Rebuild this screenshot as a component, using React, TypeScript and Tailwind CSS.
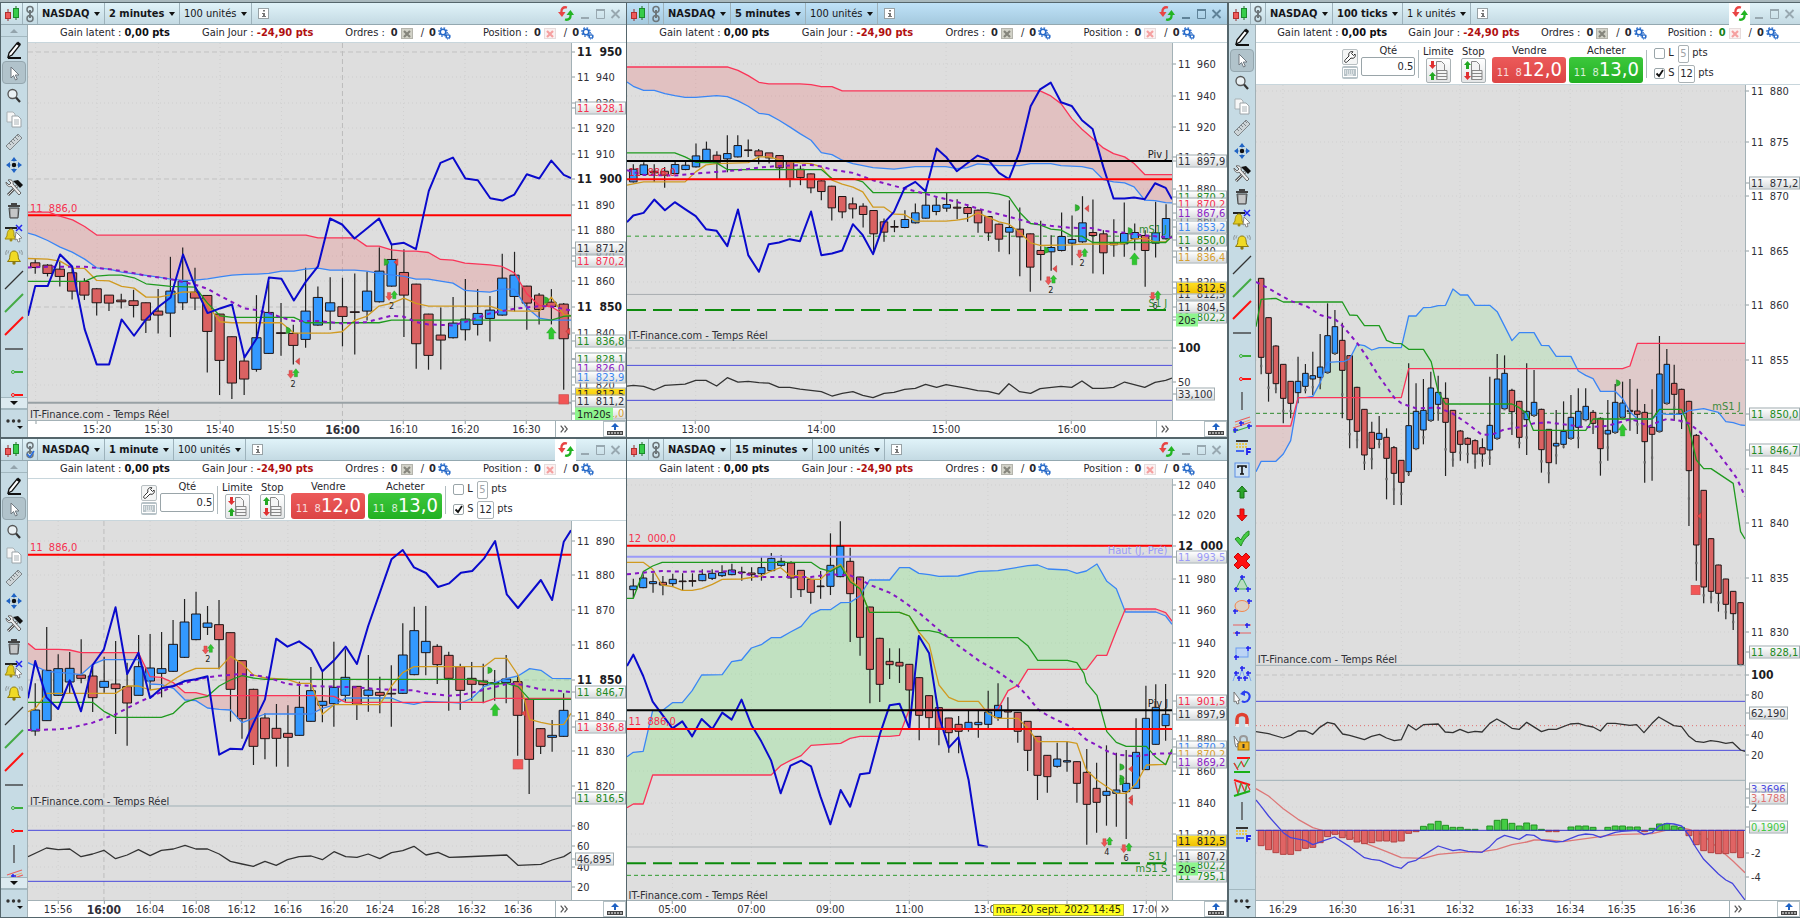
import React from "react";
import clsx from "clsx";

type Tone = "plain" | "bold" | "ink" | "red" | "green" | "lime" | "blue" | "indigo" | "coral" | "purple" | "gold" | "lilac" | "alert" | "timer";
type Candle = number[]; // high, body top, body bottom, low, 1 when the bar closes up

interface Note {
    x: number;
    y: number;
    text: string;
    tone: string;
    end?: boolean;
}

interface Mark {
    kind: "up" | "pair" | "right" | "left" | "square";
    x: number;
    y: number;
    count?: string;
}

interface Rule {
    y: number;
    color: string;
    width?: number;
    dash?: string;
}

interface ChartData {
    box: [number, number, number, number];
    top: number;
    height: number;
    first: number;
    step: number;
    body: number;
    candles: Candle[];
    dots?: boolean;
    cloudOpacity: number;
    spanA: string;
    spanB: string;
    kijun: string;
    tenkan?: string;
    average: string;
    lagging?: string;
    rsi?: string;
    rules: Rule[];
    notes: Note[];
    marks: Mark[];
    prices: [number, string, Tone][];
    times: [number, string, boolean?][];
    histogram?: { zero: number; values: number[]; signal: string; macd: string };
    cursorTime?: string;
}

const RED = "#ff0000";
const PANE = "#9fb0b6";
const BAND = "#4a4adb";

const twoMinutes: ChartData = {
    box: [70, -501, 1352, 1132],
    top: 43,
    height: 377,
    first: 88,
    step: 30.6,
    body: 23,
    cloudOpacity: 0.3,
    candles: [
        [148, 159, 173, 192], [163, 166, 191, 200], [156, 178, 200, 230], [170, 189, 244, 269], [205, 215, 256, 271],
        [235, 237, 279, 317], [256, 256, 280, 304], [252, 271, 276, 296], [240, 273, 287, 323], [278, 279, 331, 370],
        [238, 304, 316, 371], [141, 244, 310, 382, 1], [113, 214, 279, 301, 1], [174, 247, 265, 301], [256, 257, 365, 488],
        [312, 313, 452, 556], [380, 381, 520, 568], [440, 454, 508, 556], [256, 384, 479, 486, 1], [214, 308, 431, 433, 1],
        [280, 369, 371, 438], [345, 371, 407, 464], [174, 304, 389, 414, 1], [230, 263, 346, 348, 1], [202, 279, 304, 361, 1],
        [204, 291, 320, 410], [191, 306, 308, 434], [186, 244, 304, 332, 1], [113, 184, 276, 278, 1], [104, 149, 229, 231, 1],
        [118, 188, 256, 382], [222, 223, 402, 477], [312, 313, 437, 480], [293, 376, 391, 479], [262, 340, 384, 386, 1],
        [208, 328, 360, 392, 1], [238, 311, 344, 377, 1], [259, 301, 326, 395, 1], [132, 205, 316, 318, 1], [126, 196, 260, 305, 1],
        [228, 229, 280, 360], [250, 256, 299, 344], [238, 277, 290, 344], [280, 283, 387, 540],
    ],
    spanB: "70,7 122,7 145,17 181,30 211,50 242,76 762,76 792,84 883,84 913,109 944,109 975,120 1006,124 1036,124 1067,128 1097,149 1128,151 1158,160 1220,165 1250,170 1281,189 1312,252 1343,287 1373,291 1404,313 1422,318",
    spanA: "70,70 88,76 119,92 150,112 180,127 211,148 241,174 272,178 303,187 334,192 364,197 395,202 425,208 456,212 486,211 517,207 548,201 578,196 609,194 640,193 670,191 701,184 732,184 761,178 792,175 822,181 883,181 913,184 944,191 975,195 1006,200 1036,208 1067,208 1097,214 1128,220 1158,242 1189,245 1220,247 1250,238 1281,238 1312,294 1343,325 1373,331 1422,331",
    kijun: "70,215 211,215 241,199 272,196 303,196 334,204 364,222 395,226 425,230 486,232 517,280 548,318 578,323 732,323 761,339 944,339 975,331 1373,331 1404,320 1422,318",
    tenkan: "70,146 119,148 150,154 180,175 211,176 241,212 272,213 303,230 334,235 364,262 395,262 425,255 456,246 486,247 517,285 548,336 578,339 701,339 732,370 822,370 852,366 883,332 913,320 944,289 975,281 1006,265 1036,281 1067,289 1220,289 1250,302 1281,304 1343,304 1373,262 1404,315 1422,318",
    average: "70,173 119,171 211,171 272,178 334,190 364,198 425,208 486,225 517,237 548,258 578,277 609,296 640,301 670,310 701,323 732,334 792,334 852,341 913,337 975,318 1006,321 1036,337 1067,344 1128,347 1158,337 1220,311 1281,297 1343,289 1373,290 1422,302",
    lagging: "70,318 88,229 119,229 150,134 180,170 211,358 241,464 272,464 303,329 334,378 364,329 395,291 425,263 456,134 486,230 517,310 548,296 578,284 609,443 640,385 670,203 701,207 732,272 761,217 792,170 822,26 852,44 883,86 913,57 944,26 975,104 1006,99 1036,118 1068,-57 1097,-141 1128,-157 1159,-94 1190,-89 1221,-35 1251,-28 1281,-46 1312,-107 1343,-94 1373,-148 1404,-105 1422,-95",
    rules: [
        { y: 16, color: RED, width: 2 },
        { y: 579, color: "#98a1a5", width: 2 },
    ],
    notes: [
        { x: 75, y: -4, text: "11  886,0", tone: "text-[#f5304f]" },
        { x: 75, y: 617, text: "IT-Finance.com - Temps Réel", tone: "text-[#2f3036]" },
    ],
    marks: [
        { kind: "right", x: 718, y: 362 }, { kind: "left", x: 742, y: 455 }, { kind: "pair", x: 730, y: 492, count: "2" },
        { kind: "right", x: 962, y: 157 }, { kind: "left", x: 987, y: 157 }, { kind: "pair", x: 975, y: 258, count: "2" },
        { kind: "right", x: 1361, y: 271 }, { kind: "up", x: 1373, y: 370 }, { kind: "left", x: 1415, y: 365 },
        { kind: "square", x: 1404, y: 569 },
    ],
    prices: [
        [52, "11  950", "bold"], [77, "11  940", "plain"], [103, "11  930", "plain"], [128, "11  920", "plain"], [154, "11  910", "plain"],
        [179, "11  900", "bold"], [205, "11  890", "plain"], [230, "11  880", "plain"], [256, "11  870", "plain"], [281, "11  860", "plain"],
        [307, "11  850", "bold"], [333, "11  840", "plain"], [359, "11  830", "plain"], [385, "11  820", "plain"],
        [108, "11  928,1", "red"], [248, "11  871,2", "ink"], [261, "11  870,2", "red"], [341, "11  836,8", "green"],
        [359, "11  828,1", "green"], [368, "11  826,0", "purple"], [377, "11  823,9", "blue"], [394, "11  812,5", "alert"],
        [413, "11  811,0", "gold"], [401, "11  811,2", "ink"], [414, "1m20s", "timer"],
    ],
    times: [[89, ""], [242, "15:20"], [395, "15:30"], [548, "15:40"], [701, "15:50"], [853, "16:00", true], [1005, "16:10"], [1158, "16:20"], [1311, "16:30"]],
};

const fiveMinutes: ChartData = {
    box: [18, -502, 1380, 1132],
    top: 43,
    height: 377,
    first: 34,
    step: 26.45,
    body: 19,
    cloudOpacity: 0.3,
    candles: [
        [-138, -123, -85, -83, 1], [-144, -136, -107, -105, 1], [-138, -117, -112, -85], [-130, -117, -105, -67], [-150, -137, -110, -108, 1],
        [-148, -135, -122, -120, 1], [-200, -163, -130, -128, 1], [-206, -183, -149, -147, 1], [-177, -165, -144, -93], [-225, -170, -154, -114, 1],
        [-225, -194, -160, -158, 1], [-212, -181, -179, -160], [-184, -178, -163, -138], [-172, -172, -157, -140], [-165, -164, -127, -93],
        [-147, -146, -94, -69], [-134, -123, -98, -75], [-110, -109, -67, -51], [-90, -88, -56, -30], [-73, -72, -7, 31],
        [-41, -41, 5, 24], [-38, -19, -4, 25], [-21, -12, 13, 52], [0, 1, 71, 125], [25, 35, 66, 95],
        [30, 49, 51, 66], [0, 28, 52, 54, 1], [-20, 8, 38, 40, 1], [-60, -15, 24, 26, 1], [-40, -15, 4, 15, 1],
        [-53, -17, -6, 5, 1], [-33, -9, -6, 27], [-18, -8, 10, 35], [-2, 0, 38, 68], [18, 19, 68, 92],
        [40, 42, 87, 125], [-30, 52, 66, 132, 1], [-8, 57, 80, 198], [70, 71, 171, 245], [32, 121, 133, 211],
        [75, 112, 125, 182, 1], [7, 79, 121, 124, 1], [16, 88, 99, 165, 1], [-42, 38, 95, 98, 1], [-32, 67, 76, 190],
        [60, 71, 128, 192], [27, 98, 104, 140], [-23, 70, 101, 140, 1], [40, 67, 86, 120, 1], [60, 76, 121, 230],
        [-25, 68, 99, 142, 1], [-18, 25, 86, 88, 1],
    ],
    spanB: "18,-430 272,-430 299,-420 325,-404 352,-384 377,-379 456,-379 484,-377 510,-371 537,-371 563,-358 1064,-358 1091,-343 1117,-320 1144,-275 1170,-243 1197,-215 1224,-187 1250,-170 1278,-160 1302,-140 1329,-107 1398,-107",
    spanA: "18,-385 34,-372 60,-360 87,-360 114,-350 139,-344 165,-339 192,-339 245,-344 272,-341 299,-328 325,-312 352,-291 377,-287 403,-270 430,-250 456,-230 484,-210 510,-173 537,-167 563,-150 590,-140 641,-128 694,-123 748,-131 826,-131 853,-125 879,-128 906,-139 960,-134 1012,-134 1040,-140 1091,-140 1117,-134 1170,-131 1197,-124 1224,-92 1250,-85 1278,-82 1302,-70 1329,-30 1355,-29 1382,-23 1398,-22",
    kijun: "18,-172 139,-172 165,-160 192,-144 245,-142 272,-122 510,-122 537,-95 590,-95 615,-85 641,-53 932,-53 960,-48 985,-40 1012,6 1040,40 1064,44 1091,57 1117,60 1144,77 1170,78 1197,97 1382,97 1398,78",
    tenkan: "18,-75 60,-85 165,-85 192,-115 218,-136 245,-140 325,-143 352,-160 377,-160 403,-152 430,-146 456,-142 484,-140 510,-130 537,-90 563,-78 590,-69 615,-55 641,-9 669,-9 694,12 721,13 748,33 826,33 853,30 879,25 906,8 960,35 985,42 1012,66 1040,98 1064,106 1144,104 1170,102 1224,101 1250,103 1278,100 1302,86 1329,85 1355,95 1382,95 1398,78",
    average: "18,-120 60,-106 139,-104 192,-110 245,-115 299,-120 352,-128 403,-133 484,-136 510,-131 537,-122 590,-112 641,-90 694,-73 748,-57 802,-40 853,-25 906,-5 960,12 1012,28 1040,38 1091,47 1144,53 1197,54 1224,62 1278,68 1329,76 1398,82",
    lagging: "18,36 34,16 60,8 87,-32 114,0 139,-24 165,-3 192,18 218,57 245,62 272,108 299,-2 325,135 352,185 377,102 403,97 430,87 456,93 484,4 510,135 537,130 563,121 590,42 615,75 641,132 669,38 694,5 721,-67 748,-85 774,-57 802,-185 826,-160 853,-117 906,-164 932,-152 960,-112 985,-93 1012,-175 1040,-312 1064,-363 1091,-383 1117,-324 1144,-313 1170,-270 1197,-244 1224,-130 1250,-35 1278,-35 1302,-38 1329,-33 1355,-81 1382,-67 1398,-33",
    rsi: "18,528 34,526 60,529 87,540 114,526 165,522 192,511 218,511 245,528 272,503 299,516 325,514 352,518 377,519 403,532 430,532 456,537 510,545 537,558 563,550 590,545 615,556 641,563 669,550 694,547 721,538 748,535 774,523 802,532 826,524 879,535 906,542 932,544 960,552 985,521 1012,545 1040,550 1064,536 1117,529 1144,532 1170,513 1197,535 1224,535 1250,532 1278,516 1329,532 1355,517 1382,511 1398,504",
    rules: [
        { y: 78, color: "#2e9a2e", dash: "4 4" },
        { y: -148, color: "#000000", width: 2 },
        { y: -93, color: RED, width: 2 },
        { y: 253, color: "#a9aeb1" },
        { y: 300, color: "#0c8a0c", width: 2, dash: "19 7" },
        { y: 391, color: PANE },
        { y: 466, color: BAND },
        { y: 571, color: BAND },
    ],
    notes: [
        { x: 22, y: -111, text: "11  886,0", tone: "text-[#e01c38]" },
        { x: 1388, y: -166, text: "Piv J", tone: "text-[#1c1c20]", end: true },
        { x: 1386, y: 58, text: "mS1 J", tone: "text-[#2e8a2e]", end: true },
        { x: 1386, y: 283, text: "S1 J", tone: "text-[#2e8a2e]", end: true },
        { x: 22, y: 379, text: "IT-Finance.com - Temps Réel", tone: "text-[#2f3036]" },
    ],
    marks: [
        { kind: "right", x: 1158, y: -7 }, { kind: "left", x: 1183, y: -5 }, { kind: "pair", x: 1170, y: 130, count: "2" },
        { kind: "right", x: 1080, y: 120 }, { kind: "left", x: 1102, y: 176 }, { kind: "pair", x: 1091, y: 210, count: "2" },
        { kind: "right", x: 1292, y: 62 }, { kind: "up", x: 1303, y: 146 }, { kind: "pair", x: 1355, y: 257, count: "6" },
    ],
    prices: [
        [64, "11  960", "plain"], [96, "11  940", "plain"], [127, "11  920", "plain"], [157, "11  900", "plain"], [189, "11  880", "plain"],
        [220, "11  860", "plain"], [251, "11  840", "plain"], [282, "11  820", "plain"], [348, "100", "bold"], [382, "50", "plain"],
        [161, "11  897,9", "ink"], [197, "11  870,2", "green"], [204, "11  870,2", "red"], [213, "11  867,6", "purple"],
        [227, "11  853,2", "blue"], [240, "11  850,0", "green"], [257, "11  836,4", "gold"], [294, "11  812,5", "ink"],
        [288, "11  812,5", "alert"], [317, "11  802,2", "green"], [307, "11  804,5", "ink"], [320, "20s", "timer"], [394, "33,100", "ink"],
    ],
    times: [[192, "13:00"], [510, "14:00"], [826, "15:00"], [1144, "16:00"]],
};

const oneMinute: ChartData = {
    box: [70, -447, 1352, 1137],
    top: 521,
    height: 379,
    first: 88,
    step: 28.6,
    body: 22,
    cloudOpacity: 0.3,
    candles: [
        [40, 120, 183, 197, 1], [-129, 1, 152, 152, 1], [-47, -4, 76, 78, 1], [-54, -5, 36, 70, 1], [-92, 15, 25, 40],
        [-12, 18, 83, 126], [-40, 34, 52, 68, 1], [-87, 42, 56, 192], [-22, 50, 99, 227], [-105, -10, 76, 76, 1],
        [-108, -6, 33, 60, 1], [-114, -4, 10, 82, 1], [-150, -77, 4, 6, 1], [-213, -144, -38, -36, 1], [-235, -168, -91, -89, 1],
        [-192, -141, -128, -105, 1], [-210, -136, -91, -2], [-112, -112, 58, 155], [-29, -28, 146, 206], [56, 58, 229, 285],
        [130, 144, 206, 268], [102, 175, 205, 290], [106, 190, 202, 290], [35, 112, 196, 197, 1], [-9, 62, 154, 155, 1],
        [5, 94, 106, 157, 1], [-85, 52, 101, 170, 1], [-62, 22, 76, 95, 1], [48, 49, 103, 150], [-45, 60, 76, 125, 1],
        [20, 67, 76, 130], [-14, 70, 72, 170], [-140, -45, 70, 72, 1], [-190, -118, 14, 16, 1], [-192, -86, -52, 16, 1],
        [-77, -71, -16, 42], [-55, -44, 25, 122], [-19, -10, 61, 120], [-24, 25, 43, 92], [-19, 33, 44, 100],
        [0, 38, 41, 92], [-45, 27, 38, 100, 1], [15, 35, 136, 257], [86, 87, 268, 372], [174, 176, 229, 252],
        [150, 196, 202, 245, 1], [70, 121, 199, 200, 1],
    ],
    spanB: "70,-80 88,-62 145,-62 174,-60 202,-52 345,-52 374,20 402,22 432,38 461,68 488,68 517,77 803,77 832,79 861,97 1205,97 1233,85 1422,85",
    spanA: "70,-22 88,-12 116,4 145,7 174,10 202,14 231,-17 259,-31 345,-31 374,42 402,44 432,55 461,90 488,92 517,114 546,118 574,120 603,158 631,145 660,132 775,132 803,115 832,105 861,84 975,84 1003,98 1031,103 1061,94 1119,97 1148,99 1176,84 1205,50 1233,38 1262,25 1290,18 1319,-4 1347,1 1375,25 1422,26",
    kijun: "70,97 231,97 259,124 288,142 402,142 432,130 461,97 488,86 517,79 546,48 574,30 603,17 631,24 660,28 1176,28 1205,36 1233,42 1262,40 1290,50 1319,88 1422,88",
    tenkan: "70,125 88,116 116,70 288,70 317,48 345,48 374,60 402,55 432,30 461,8 488,-5 546,-5 574,-41 603,-19 631,15 660,24 716,28 745,40 775,40 803,133 832,104 946,104 975,48 1003,8 1031,-10 1205,-10 1233,-35 1262,-35 1290,15 1319,148 1347,157 1375,164 1404,163 1422,130",
    average: "70,180 145,178 174,174 231,158 288,133 345,97 402,66 432,48 488,30 517,22 546,17 603,12 660,20 716,42 775,48 832,50 889,52 946,58 1031,61 1061,70 1119,77 1148,75 1205,60 1262,42 1290,42 1319,50 1347,58 1404,64 1422,66",
    lagging: "70,85 88,-27 116,82 145,117 174,31 202,124 231,-15 259,-62 288,-188 317,12 345,-52 374,84 402,55 432,48 461,33 488,28 517,19 546,254 574,236 603,238 631,160 660,88 688,-94 716,-70 745,-86 775,-60 803,4 832,-29 861,-70 889,-18 917,-132 975,-332 1003,-360 1031,-308 1061,-291 1091,-249 1119,-260 1148,-292 1176,-297 1205,-334 1233,-387 1262,-227 1290,-186 1347,-270 1375,-210 1404,-385 1422,-419",
    rsi: "70,560 116,534 145,539 174,537 202,560 231,552 259,541 288,566 317,555 345,539 374,557 402,541 432,537 461,526 488,537 517,537 546,552 574,574 603,582 631,589 660,574 688,586 716,569 745,560 775,558 803,569 832,545 861,560 889,562 917,552 946,566 975,548 1003,542 1031,529 1061,555 1091,547 1119,562 1148,561 1205,558 1262,555 1290,586 1347,583 1375,570 1404,560 1422,546",
    rules: [
        { y: -346, color: RED, width: 2 },
        { y: 408, color: PANE },
        { y: 481, color: BAND },
        { y: 634, color: BAND },
    ],
    notes: [
        { x: 75, y: -366, text: "11  886,0", tone: "text-[#f5304f]" },
        { x: 75, y: 395, text: "IT-Finance.com - Temps Réel", tone: "text-[#2f3036]" },
    ],
    marks: [
        { kind: "pair", x: 518, y: -62, count: "2" }, { kind: "right", x: 1220, y: 1 }, { kind: "up", x: 1233, y: 119 },
        { kind: "left", x: 1305, y: 130 }, { kind: "square", x: 1290, y: 283 },
    ],
    prices: [
        [541, "11  890", "plain"], [575, "11  880", "plain"], [610, "11  870", "plain"], [645, "11  860", "plain"], [680, "11  850", "bold"],
        [716, "11  840", "plain"], [751, "11  830", "plain"], [786, "11  820", "plain"], [826, "80", "plain"], [846, "60", "plain"],
        [867, "40", "plain"], [887, "20", "plain"],
        [692, "11  846,7", "green"], [727, "11  836,8", "red"], [798, "11  816,5", "green"], [859, "46,895", "ink"],
    ],
    times: [[145, "15:56"], [259, "16:00", true], [374, "16:04"], [488, "16:08"], [602, "16:12"], [717, "16:16"], [832, "16:20"], [946, "16:24"], [1060, "16:28"], [1175, "16:32"], [1290, "16:36"]],
};

const fifteenMinutes: ChartData = {
    box: [18, -573, 1380, 1263],
    top: 479,
    height: 421,
    first: 34,
    step: 24.96,
    body: 18,
    cloudOpacity: 0.3,
    candles: [
        [-274, -252, -241, -215, 1], [-287, -276, -247, -245, 1], [-290, -265, -259, -232, 1], [-282, -263, -255, -224], [-289, -272, -259, -250, 1],
        [-290, -267, -265, -240], [-290, -268, -266, -250], [-302, -287, -268, -266, 1], [-302, -290, -275, -270, 1], [-314, -292, -283, -279, 1],
        [-319, -300, -286, -284, 1], [-310, -294, -292, -268], [-308, -291, -286, -268], [-339, -307, -289, -268, 1], [-351, -335, -298, -296, 1],
        [-344, -326, -314, -310, 1], [-326, -321, -276, -216], [-300, -299, -241, -219], [-274, -272, -233, -199], [-297, -252, -250, -214],
        [-410, -314, -251, -225, 1], [-446, -371, -280, -278, 1], [-367, -326, -229, -84], [-280, -279, -98, -43], [-190, -189, -2, 100],
        [-97, -95, 43, 96], [-65, -26, -16, 27], [-65, -23, -12, 39], [-18, -17, 60, 175], [22, 23, 136, 211],
        [76, 77, 143, 175], [112, 113, 175, 226], [143, 144, 188, 248], [138, 163, 184, 250], [122, 157, 176, 185, 1],
        [122, 157, 164, 203, 1], [62, 126, 163, 175, 1], [40, 106, 143, 152, 1], [82, 122, 126, 175], [126, 127, 184, 218],
        [153, 154, 241, 303], [198, 199, 316, 390], [255, 256, 320, 368], [218, 267, 289, 293, 1], [214, 272, 276, 305, 1],
        [274, 275, 340, 398], [237, 307, 403, 524], [278, 355, 397, 488], [226, 364, 376, 467, 1], [248, 360, 370, 470, 1],
        [240, 340, 365, 507, 1], [145, 247, 355, 356, 1], [47, 145, 299, 300, 1], [43, 112, 223, 224, 1], [42, 133, 167, 212, 1],
    ],
    spanB: "18,413 34,402 59,402 83,315 383,315 407,287 432,271 459,257 484,226 559,220 583,205 608,199 683,199 708,196 733,118 957,118 983,62 1008,46 1033,-2 1181,-2 1208,-44 1233,-44 1257,-117 1280,-183 1357,-183 1382,-172 1398,-147",
    spanA: "18,260 34,247 59,244 83,122 107,122 133,98 158,98 183,62 207,15 259,14 283,-25 308,-30 333,-66 358,-76 383,-97 407,-97 432,-114 459,-131 484,-167 508,-181 533,-181 559,-202 583,-203 608,-222 632,-270 683,-270 708,-307 733,-307 757,-290 783,-286 808,-281 857,-282 908,-296 957,-298 1033,-313 1058,-315 1084,-303 1133,-300 1157,-290 1181,-297 1208,-318 1233,-266 1257,-244 1280,-174 1357,-174 1382,-162 1398,-137",
    kijun: "18,-215 34,-215 59,-295 83,-312 107,-323 484,-323 508,-304 533,-296 559,-312 583,-265 608,-244 632,-173 708,-173 733,-162 757,-118 783,-118 808,-112 833,-97 1008,-97 1033,-73 1058,-29 1133,-29 1157,-22 1175,10 1181,38 1208,76 1233,185 1257,217 1282,229 1333,229 1357,262 1382,284 1398,238",
    tenkan: "18,-323 59,-323 83,-302 107,-255 134,-250 158,-239 183,-239 207,-244 234,-257 259,-272 308,-273 358,-282 383,-297 407,-307 432,-282 459,-284 484,-272 508,-272 533,-300 559,-317 583,-272 608,-244 632,-173 708,-173 733,-162 757,-114 783,-77 808,45 833,82 857,94 908,94 932,130 957,145 1008,145 1033,175 1058,215 1133,215 1157,220 1181,300 1208,330 1233,350 1257,370 1282,370 1308,340 1333,285 1382,283 1398,240",
    average: "18,-287 59,-292 107,-297 158,-295 283,-296 308,-290 358,-279 484,-279 533,-287 583,-284 608,-272 632,-256 683,-232 708,-214 757,-172 808,-120 857,-73 908,-29 957,5 1008,48 1033,80 1058,117 1084,137 1133,165 1157,183 1181,209 1208,226 1233,243 1257,254 1308,259 1357,251 1398,250",
    lagging: "18,-12 34,-46 59,18 83,95 133,175 158,154 183,199 207,147 234,177 259,128 283,149 308,89 333,165 358,214 383,272 407,370 432,287 459,272 484,289 508,380 533,463 559,360 583,410 608,313 632,309 659,190 683,106 708,101 733,175 757,-102 783,-50 808,140 833,233 857,202 883,330 908,525 932,531",
    rules: [
        { y: -373, color: RED, width: 2 },
        { y: -340, color: "#9a9af8", width: 2 },
        { y: 121, color: "#000000", width: 2 },
        { y: 177, color: RED, width: 2 },
        { y: 531, color: "#a9aeb1" },
        { y: 580, color: "#0c8a0c", width: 2, dash: "19 7" },
        { y: 616, color: "#2e9a2e", dash: "4 3" },
    ],
    notes: [
        { x: 22, y: -393, text: "12  000,0", tone: "text-[#f5304f]" },
        { x: 22, y: 156, text: "11  886,0", tone: "text-[#f5304f]" },
        { x: 1386, y: -358, text: "Haut (J, Pré)", tone: "text-[#9a9af8]", end: true },
        { x: 1388, y: 102, text: "Piv J", tone: "text-[#1c1c20]", end: true },
        { x: 1386, y: 562, text: "S1 J", tone: "text-[#2e8a2e]", end: true },
        { x: 1386, y: 597, text: "mS1 S", tone: "text-[#2e8a2e]", end: true },
        { x: 22, y: 679, text: "IT-Finance.com - Temps Réel", tone: "text-[#2f3036]" },
    ],
    marks: [
        { kind: "right", x: 1271, y: 291 }, { kind: "right", x: 1271, y: 325 }, { kind: "right", x: 1271, y: 335 },
        { kind: "left", x: 1294, y: 297 }, { kind: "left", x: 1294, y: 385 }, { kind: "left", x: 1294, y: 396 },
        { kind: "pair", x: 1233, y: 516, count: "4" }, { kind: "pair", x: 1282, y: 534, count: "6" },
    ],
    prices: [
        [485, "12  040", "plain"], [515, "12  020", "plain"], [546, "12  000", "bold"], [579, "11  980", "plain"], [610, "11  960", "plain"],
        [643, "11  940", "plain"], [674, "11  920", "plain"], [739, "11  880", "plain"], [771, "11  860", "plain"], [803, "11  840", "plain"],
        [834, "11  820", "plain"],
        [557, "11  993,5", "lilac"], [701, "11  901,5", "red"], [714, "11  897,9", "ink"], [747, "11  870,2", "blue"], [754, "11  870,2", "gold"],
        [762, "11  869,2", "purple"], [841, "11  812,5", "alert"], [876, "11  795,1", "green"], [865, "11  802,2", "green"],
        [856, "11  807,2", "ink"], [869, "20s", "timer"],
    ],
    times: [[133, "05:00"], [333, "07:00"], [533, "09:00"], [733, "11:00"], [932, "13:00"], [1133, ""], [1333, "17:00"]],
    cursorTime: "mar. 20 sept. 2022 14:45",
};

const ticks: ChartData = {
    box: [96, -435, 1326, 2445],
    top: 85,
    height: 815,
    first: 110,
    step: 20,
    body: 15,
    dots: true,
    cloudOpacity: 0.2,
    candles: [
        [144, 145, 382, 433], [262, 263, 430, 515], [346, 348, 461, 490], [402, 403, 505, 580], [453, 454, 520, 565],
        [380, 454, 488, 520, 1], [402, 430, 469, 490, 1], [365, 437, 447, 495, 1], [312, 411, 442, 478, 1], [220, 317, 427, 429, 1],
        [240, 290, 370, 372, 1], [278, 331, 421, 565], [375, 377, 569, 655], [470, 472, 604, 655], [537, 538, 675, 720],
        [575, 607, 655, 718], [558, 610, 628, 655, 1], [595, 622, 685, 808], [648, 653, 730, 825], [690, 691, 757, 825],
        [400, 587, 725, 738, 1], [460, 544, 656, 657, 1], [447, 541, 600, 643, 1], [425, 474, 571, 573, 1], [437, 487, 523, 572, 1],
        [457, 505, 577, 738], [540, 541, 667, 710], [600, 603, 643, 692], [622, 625, 643, 700], [628, 632, 672, 716],
        [625, 653, 672, 710], [440, 586, 660, 705, 1], [372, 447, 625, 627, 1], [376, 430, 536, 538, 1], [476, 481, 545, 615],
        [512, 514, 622, 655], [400, 544, 569, 675, 1], [420, 517, 556, 558, 1], [536, 538, 659, 728], [597, 598, 698, 760],
        [540, 640, 648, 703, 1], [514, 604, 643, 655, 1], [495, 562, 625, 626, 1], [475, 544, 592, 655, 1], [475, 529, 569, 571, 1],
        [540, 547, 580, 612], [562, 565, 656, 737], [510, 601, 612, 692, 1], [462, 517, 607, 609, 1], [455, 519, 562, 565, 1],
        [447, 541, 545, 602], [476, 543, 553, 612], [522, 547, 635, 758], [478, 592, 613, 752], [318, 432, 604, 605, 1],
        [357, 403, 520, 521, 1], [404, 460, 493, 572], [476, 478, 551, 597], [512, 514, 722, 888], [612, 616, 945, 1052],
        [780, 781, 1071, 1120], [925, 926, 1084, 1120], [1004, 1005, 1090, 1145], [1046, 1047, 1123, 1168], [1083, 1084, 1151, 1200],
        [1117, 1118, 1304, 1305],
    ],
    spanB: "96,588 190,588 210,503 490,503 510,416 1090,416 1110,408 1130,340 1422,340",
    spanA: "96,725 110,694 150,694 170,672 190,632 210,503 230,503 250,499 270,458 290,397 335,394 350,387 370,343 390,347 410,360 430,353 490,353 510,258 530,258 550,233 570,232 590,227 610,226 630,177 650,195 670,195 690,226 730,226 750,245 790,332 810,308 850,308 870,346 890,347 910,379 950,379 970,423 990,436 1010,446 1030,484 1070,484 1090,506 1110,545 1130,567 1170,567 1190,550 1210,553 1250,553 1270,542 1310,536 1350,547 1370,575 1390,578 1410,585 1422,586",
    kijun: "96,290 110,208 150,205 170,216 330,216 350,255 370,256 390,287 430,287 450,331 470,340 490,341 510,358 550,358 571,395 590,485 610,522 790,522 810,533 830,550 848,601 990,601 1010,567 1170,567 1190,538 1250,538 1270,592 1290,690 1310,716 1330,716 1390,760 1410,905 1422,927",
    average: "96,156 130,175 190,213 230,227 250,240 270,255 310,267 331,288 371,340 390,370 430,440 471,503 490,520 530,535 590,533 630,551 671,582 709,615 740,612 770,598 810,592 850,580 889,577 929,583 990,592 1048,588 1088,575 1110,568 1130,573 1160,590 1188,575 1210,567 1250,573 1270,580 1300,606 1330,642 1370,700 1400,745 1422,800",
    rsi: "96,1505 130,1511 170,1524 190,1516 210,1503 231,1503 250,1513 269,1492 290,1477 309,1482 331,1512 350,1516 390,1529 409,1519 431,1513 450,1524 471,1532 490,1529 509,1484 530,1500 550,1484 590,1482 609,1506 630,1508 649,1498 671,1508 690,1504 709,1506 730,1480 749,1467 770,1480 790,1495 810,1498 830,1477 870,1505 889,1498 910,1498 948,1482 970,1480 990,1487 1010,1491 1030,1503 1048,1480 1070,1480 1110,1486 1128,1484 1148,1508 1170,1480 1188,1461 1229,1487 1250,1490 1270,1519 1288,1534 1310,1537 1329,1532 1350,1535 1370,1540 1388,1537 1410,1560 1422,1564",
    rules: [
        { y: 550, color: "#2e8a2e", dash: "4 3" },
        { y: 1306, color: PANE },
        { y: 1414, color: BAND },
        { y: 1487, color: "#e07070", dash: "1 3" },
        { y: 1561, color: BAND },
        { y: 1651, color: PANE },
    ],
    notes: [
        { x: 1410, y: 532, text: "mS1 J", tone: "text-[#3c8a3c]", end: true },
        { x: 101, y: 1289, text: "IT-Finance.com - Temps Réel", tone: "text-[#2f3036]" },
    ],
    marks: [
        { kind: "right", x: 1078, y: 459 }, { kind: "up", x: 1090, y: 600 }, { kind: "left", x: 1299, y: 858 },
        { kind: "square", x: 1288, y: 1080 },
    ],
    prices: [
        [91, "11  880", "plain"], [142, "11  875", "plain"], [196, "11  870", "plain"], [251, "11  865", "plain"], [305, "11  860", "plain"],
        [360, "11  855", "plain"], [469, "11  845", "plain"], [523, "11  840", "plain"], [578, "11  835", "plain"], [632, "11  830", "plain"],
        [675, "100", "bold"], [695, "80", "plain"], [735, "40", "plain"], [755, "20", "plain"], [807, "2", "plain"], [853, "-2", "plain"], [877, "-4", "plain"],
        [183, "11  871,2", "ink"], [414, "11  850,0", "green"], [450, "11  846,7", "green"], [652, "11  828,1", "green"],
        [713, "62,190", "ink"], [789, "3,3696", "indigo"], [798, "3,1788", "coral"], [827, "0,1909", "lime"],
    ],
    times: [[169, "16:29"], [331, "16:30"], [490, "16:31"], [649, "16:32"], [810, "16:33"], [948, "16:34"], [1088, "16:35"], [1250, "16:36"]],
    histogram: {
        zero: 1801,
        values: [
            46, 58, 67, 72, 72, 61, 54, 51, 37, 19, 12, 22, 27, 35, 40, 37, 32, 32, 35, 32, 9, 4,
            -12, -19, -27, -15, -9, -9, -3, -3, 0, -13, -30, -33, -21, -13, -22, -16, -3, 4, 4, 0, -10, -13,
            -13, -9, 0, -9, -13, -13, -10, -10, 4, -6, -19, -20, -13, -9, 16, 43, 61, 67, 70, 70, 67, 82,
        ],
        signal: "96,1676 130,1698 170,1736 210,1768 250,1793 290,1806 330,1812 370,1827 400,1843 450,1865 490,1883 550,1885 590,1873 650,1867 709,1865 749,1858 790,1844 830,1836 850,1830 889,1830 929,1835 990,1826 1048,1817 1088,1813 1170,1811 1210,1800 1250,1794 1270,1798 1310,1817 1350,1855 1390,1894 1422,1928",
        macd: "96,1710 110,1729 130,1758 170,1808 190,1823 231,1832 250,1844 280,1832 309,1821 350,1850 390,1883 409,1888 431,1891 471,1910 490,1915 509,1897 530,1891 550,1876 590,1848 630,1862 649,1859 671,1864 709,1867 730,1850 749,1828 770,1816 810,1828 830,1814 850,1816 870,1830 910,1836 929,1834 970,1816 990,1812 1010,1814 1030,1822 1070,1807 1088,1804 1128,1801 1148,1814 1170,1808 1188,1788 1210,1780 1229,1782 1250,1788 1270,1816 1288,1851 1310,1888 1350,1932 1370,1950 1388,1960 1422,2010",
    },
};

/* ---------- chart helpers ---------- */

type Point = [number, number];

const parse = (line: string): Point[] => line.split(" ").map((p) => p.split(",").map(Number) as Point);

function valueAt(line: Point[], x: number) {
    const i = line.findIndex((p) => p[0] >= x);
    if (i <= 0) return line[i === 0 ? 0 : line.length - 1][1];
    const [x0, y0] = line[i - 1];
    const [x1, y1] = line[i];
    return y0 + ((y1 - y0) * (x - x0)) / (x1 - x0);
}

// Splits the area between the two spans wherever they cross
function cloud(spanA: string, spanB: string) {
    const a = parse(spanA);
    const b = parse(spanB);
    const xs = [...new Set([...a, ...b].map((p) => p[0]))].sort((m, n) => m - n);
    const areas: { bull: boolean; points: string }[] = [];
    let upper: Point[] = [];
    let lower: Point[] = [];
    let bull = valueAt(a, xs[0]) < valueAt(b, xs[0]);

    const close = () => {
        areas.push({ bull, points: [...upper, ...lower.reverse()].map((p) => p.join(",")).join(" ") });
        upper = [];
        lower = [];
    };

    xs.forEach((x, i) => {
        const ya = valueAt(a, x);
        const yb = valueAt(b, x);
        if (i > 0 && ya !== yb && ya < yb !== bull) {
            const px = xs[i - 1];
            const before = valueAt(a, px) - valueAt(b, px);
            const t = before / (before - (ya - yb));
            const cx = px + (x - px) * t;
            const cross: Point = [cx, valueAt(a, cx)];
            upper.push(cross);
            lower.push(cross);
            close();
            bull = !bull;
            upper.push(cross);
            lower.push(cross);
        }
        upper.push([x, ya]);
        lower.push([x, yb]);
    });
    close();
    return areas;
}

function Line({ points, color, width = 1, dash }: { points: string; color: string; width?: number; dash?: string }) {
    return (
        <polyline points={points} fill="none" stroke={color} strokeWidth={width} strokeDasharray={dash} strokeLinejoin="round" vectorEffect="non-scaling-stroke" />
    );
}

function MarkShape({ mark }: { mark: Mark }) {
    const { kind, x, y } = mark;
    const up = (cx: number, cy: number, w: number, h: number) =>
        `${cx},${cy - h} ${cx + w},${cy} ${cx + w / 2},${cy} ${cx + w / 2},${cy + h} ${cx - w / 2},${cy + h} ${cx - w / 2},${cy} ${cx - w},${cy}`;
    if (kind === "up") return <polygon points={up(x, y, 12, 18)} fill="#2fc62f" stroke="#1f9a1f" strokeWidth="1" />;
    if (kind === "right") return <path d={`M${x - 5} ${y - 10}q11 2 11 10q0 8 -11 10z`} fill="#2fb52f" stroke="#1a7a1a" strokeWidth="1" />;
    if (kind === "left") return <path d={`M${x + 4} ${y - 10}l-10 10l10 10z`} fill="#e84848" stroke="#a02525" strokeWidth="1" />;
    if (kind === "square") return <rect x={x - 12} y={y - 14} width="24" height="28" fill="#f25555" stroke="#c94f4f" strokeWidth="2" />;
    return (
        <>
            <polygon points={up(x - 6, y + 2, 8, -12)} fill="#ee5555" stroke="#b53535" strokeWidth="1" />
            <polygon points={up(x + 7, y - 3, 8, 12)} fill="#2fc62f" stroke="#1f8a1f" strokeWidth="1" />
        </>
    );
}

function Plot({ data }: { data: ChartData }) {
    const [bx, by, bw, bh] = data.box;
    const toUnits = (px: number) => by + ((px - data.top) / data.height) * bh;
    const left = (x: number) => `${((x - bx) / bw) * 100}%`;
    const top = (y: number) => `${((y - by) / bh) * 100}%`;

    return (
        <div className="relative min-w-0 flex-1 overflow-hidden bg-[#dedede]">
            <svg className="absolute inset-0 h-full w-full" viewBox={data.box.join(" ")} preserveAspectRatio="none" aria-hidden="true">
                {data.prices
                    .filter(([, , tone]) => tone === "plain" || tone === "bold")
                    .map(([y, text, tone]) => (
                        <Line key={text} points={`${bx},${toUnits(y)} ${bx + bw},${toUnits(y)}`} color={tone === "bold" ? "#c2c2c2" : "#d0d0d0"} dash={tone === "bold" ? "5 3" : "1 3"} />
                    ))}
                {data.times.map(([x, , strong]) => (
                    <Line key={x} points={`${x},${by} ${x},${by + bh}`} color={strong ? "#bdbdbd" : "#d0d0d0"} dash={strong ? "5 3" : "1 3"} />
                ))}
                {cloud(data.spanA, data.spanB).map((area) => (
                    <polygon key={area.points} points={area.points} fill={area.bull ? "#7de87d" : "#e87d7d"} fillOpacity={data.cloudOpacity} />
                ))}
                {data.rules.slice(0, 1).map((rule) => (
                    <Line key={rule.y} points={`${bx},${rule.y} ${bx + bw},${rule.y}`} color={rule.color} width={rule.width} dash={rule.dash} />
                ))}
                {data.candles.map(([high, open, close, low, bull], i) => {
                    const x = data.first + i * data.step;
                    return (
                        <g key={i}>
                            <line x1={x} x2={x} y1={high} y2={low} stroke="#222222" strokeWidth="1.2" vectorEffect="non-scaling-stroke" />
                            <rect x={x - data.body / 2} y={open} width={data.body} height={close - open} fill={bull ? "#3399ff" : "#da6262"} stroke="#1c1414" strokeWidth="1" vectorEffect="non-scaling-stroke" />
                            {data.dots && <rect x={x - 3} y={(close + low) / 2 - 3} width="6" height="7" fill="#666666" />}
                        </g>
                    );
                })}
                <Line points={data.spanA} color="#3a86f5" width={1.3} />
                <Line points={data.spanB} color="#fa3458" width={1.3} />
                {data.tenkan && <Line points={data.tenkan} color="#d09a20" width={1.3} />}
                <Line points={data.kijun} color="#1f9a1f" width={1.3} />
                <Line points={data.average} color="#8516c4" width={2} dash="4 4" />
                {data.lagging && <Line points={data.lagging} color="#0a0acc" width={2} />}
                {data.rules.slice(1).map((rule) => (
                    <Line key={rule.y} points={`${bx},${rule.y} ${bx + bw},${rule.y}`} color={rule.color} width={rule.width} dash={rule.dash} />
                ))}
                {data.rsi && <Line points={data.rsi} color="#333333" width={1.3} />}
                {data.histogram && (
                    <>
                        <Line points={data.histogram.signal} color="#dd7777" width={1.3} />
                        {data.histogram.values.map((value, i) => (
                            <rect
                                key={i}
                                x={data.first + i * data.step - 8}
                                y={data.histogram!.zero + Math.min(value, 0)}
                                width="16"
                                height={Math.abs(value)}
                                fill={value > 0 ? "#e06464" : "#44cc44"}
                                stroke={value > 0 ? "#b04040" : "#229022"}
                                strokeWidth="1"
                                vectorEffect="non-scaling-stroke"
                            />
                        ))}
                        <Line points={`${bx},${data.histogram.zero} ${bx + bw},${data.histogram.zero}`} color="#3333cc" />
                        <Line points={data.histogram.macd} color="#4444dd" width={1.3} />
                    </>
                )}
                {data.marks.map((mark) => (
                    <MarkShape key={`${mark.x}-${mark.y}`} mark={mark} />
                ))}
            </svg>
            {data.marks
                .filter((mark) => mark.count)
                .map((mark) => (
                    <span key={mark.x} className="absolute -translate-x-1/2 text-[9px] leading-[10px] text-[#222222]" style={{ left: left(mark.x), top: top(mark.y + 15) }}>
                        {mark.count}
                    </span>
                ))}
            {data.notes.map((note) => (
                <span
                    key={`${note.text}${note.y}`}
                    className={clsx("absolute -translate-y-1/2 whitespace-pre leading-3", note.tone, note.end && "-translate-x-full")}
                    style={{ left: left(note.x), top: top(note.y) }}
                >
                    {note.text}
                </span>
            ))}
        </div>
    );
}

const toneClass: Record<Tone, string> = {
    plain: "pl-[2px] text-[#303038]",
    bold: "pl-[2px] text-xs font-bold text-[#1c1c22]",
    ink: "text-[#303038]",
    red: "text-[#f5304f]",
    green: "text-[#228a22]",
    lime: "text-[#44c844]",
    blue: "text-[#3a86f0]",
    indigo: "text-[#4a4ae0]",
    coral: "text-[#dd7272]",
    purple: "text-[#8a22c4]",
    gold: "text-[#d6a030]",
    lilac: "text-[#9a9af8]",
    alert: "text-[#1c1c22]",
    timer: "text-[#1c1c22]",
};

function PriceAxis({ data }: { data: ChartData }) {
    return (
        <div className="relative w-[55px] shrink-0 overflow-hidden border-l border-[#a3b1b6] bg-white">
            {data.prices.map(([y, text, tone], i) => {
                const boxed = tone !== "plain" && tone !== "bold";
                return (
                    <div key={i} className="absolute left-0 flex -translate-y-1/2 items-center" style={{ top: `${((y - data.top) / data.height) * 100}%` }}>
                        <span className="h-px w-[3px] bg-[#8f9ba0]" />
                        <span
                            className={clsx(
                                "whitespace-pre leading-[11px]",
                                toneClass[tone],
                                boxed && tone !== "timer" && "border border-[#a0abaf] px-px",
                                boxed && tone !== "alert" && tone !== "timer" && "bg-gradient-to-b from-white to-[#d9dcde]",
                                tone === "alert" && "bg-gradient-to-b from-[#ffe020] to-[#f0c000]",
                                tone === "timer" && "bg-[#8ef58e] px-[2px] py-px"
                            )}
                        >
                            {text}
                        </span>
                    </div>
                );
            })}
        </div>
    );
}

function TimeAxis({ data }: { data: ChartData }) {
    const [bx, , bw] = data.box;
    return (
        <div className="flex h-[17px] shrink-0 border-t border-[#a3b1b6] bg-white">
            <div className="relative min-w-0 flex-1 overflow-hidden">
                {data.times.map(([x, text, strong]) => (
                    <div key={x} className="absolute top-0 flex -translate-x-1/2 flex-col items-center" style={{ left: `${((x - bx) / bw) * 100}%` }}>
                        <span className="h-[3px] w-px bg-[#8f9ba0]" />
                        <span className={clsx("leading-3 text-[#303038]", strong && "text-xs font-bold text-[#1c1c22]")}>{text}</span>
                    </div>
                ))}
                {data.cursorTime && (
                    <span className="absolute right-12 top-[3px] whitespace-nowrap border border-[#b5b540] bg-[#ffff1e] px-[2px] leading-[10px] text-[#30300a]">
                        {data.cursorTime}
                    </span>
                )}
                <button type="button" aria-label="Dernière bougie" className="absolute right-0 top-0 flex h-4 w-4 items-center justify-center border-l border-[#a3b1b6] bg-white">
                    <svg width="8" height="8" viewBox="0 0 8 8" fill="none" stroke="#555555" strokeWidth="1.2" aria-hidden="true">
                        <path d="M.7 .7L3.500 4 .7 7.300M4.500 .7L7.300 4 4.500 7.300" />
                    </svg>
                </button>
            </div>
            <div className="flex w-[55px] shrink-0 justify-end">
                <button type="button" aria-label="Échelle" className="flex h-4 w-[23px] items-center justify-center border border-[#b4c0c4] bg-white">
                    <svg width="16" height="13" viewBox="0 0 16 13" aria-hidden="true">
                        <path d="M8 0l4 4H9v3H7V4H4z" fill="#1f63c4" />
                        <rect y="8" width="16" height="4" fill="#444444" />
                        <path d="M2 9v2M5 9v2M8 9v2M11 9v2M14 9v2" stroke="#ffffff" />
                    </svg>
                </button>
            </div>
        </div>
    );
}

/* ---------- toolbar ---------- */

const plus = (x: number, y: number) => `M${x - 2} ${y}h5M${x} ${y - 2}v5`;

const icons: Record<string, React.ReactNode> = {
    Dessiner: (
        <>
            <path d="M5 13l8-10 3 2-8 10-4 2z" fill="#ffffff" stroke="#111111" strokeWidth="1.3" />
            <path d="M12 4l2-2.500 3 2.500-2 2z" fill="#111111" />
            <path d="M4 18h13" stroke="#111111" strokeWidth="2" />
        </>
    ),
    Pointeur: <path d="M7 4v11l2.500-2.500 2 4.500 1.800-.8-2-4.200H15z" fill="#ffffff" stroke="#707880" />,
    Loupe: (
        <>
            <circle cx="8.500" cy="8" r="4.500" fill="#eaf1f4" stroke="#555555" strokeWidth="1.300" />
            <path d="M12 11.500l4 4.500" stroke="#333333" strokeWidth="2.200" />
        </>
    ),
    Copier: (
        <>
            <path d="M3 3h6l2 2v8H3z" fill="#f6f6f6" stroke="#a9b1b5" />
            <path d="M8 7h6l3 3v8H8z" fill="#ffffff" stroke="#9ba3a7" />
            <path d="M10 11h5M10 13h5M10 15h5" stroke="#a9b1b5" />
        </>
    ),
    Mesurer: (
        <>
            <path d="M2 14L14 2l4 4L6 18z" fill="#cdd4d7" stroke="#7e868a" />
            <path d="M5 11l2 2M7 9l3 3M9 7l2 2M11 5l3 3M13 3l2 2" stroke="#7e868a" />
        </>
    ),
    Déplacer: (
        <>
            <path d="M10 2l3 4H7zM10 18l3-4H7zM2 10l4-3v6zM18 10l-4-3v6z" fill="#1f63c4" />
            <path d="M10 5v10M5 10h10" stroke="#1f63c4" strokeWidth="2" />
            <circle cx="10" cy="10" r="3" fill="#111111" stroke="#c6dbe4" strokeWidth="1.500" />
        </>
    ),
    Outils: (
        <>
            <path d="M4 17L13 8" stroke="#555555" strokeWidth="3" />
            <path d="M4 17L13 8" stroke="#dddddd" />
            <path d="M9 3l5-1 5 5-3 3z" fill="#111111" />
            <path d="M2 4l3 3 2-2-3-3c3-1 6 1 5 4l8 9-2 2-8-9C5 10 2 7 2 4z" fill="#ececec" stroke="#666666" />
        </>
    ),
    Supprimer: (
        <>
            <path d="M4 5h12M8 4V3h4v1" stroke="#444444" strokeWidth="2" fill="none" />
            <path d="M5 7h10l-1 10H6z" fill="#9da0a2" stroke="#444444" />
            <path d="M8 8v8M10 8v8M12 8v8" stroke="#ececec" />
        </>
    ),
    "Alerte objet": (
        <>
            <path d="M1 4h12" stroke="#222222" strokeWidth="2" />
            <path d="M12 1l6 6M18 1l-6 6" stroke="#2222ee" strokeWidth="1.500" />
            <path d="M7 5c3 0 3 4 3 7l2 3H1l2-3c0-3 1-7 4-7z" fill="#e2cc20" stroke="#a08c10" />
            <circle cx="7" cy="16" r="1.500" fill="#a08c10" />
            <path d="M12 8l6 6-3 .5 1 3-2 .5-1-3-2 1z" fill="#ffffff" stroke="#888888" />
        </>
    ),
    Alerte: (
        <>
            <path d="M10 4c4 0 4 4 4.500 8l2 2.500h-13l2-2.500C6 8 6 4 10 4z" fill="#f0da24" stroke="#8c7a10" />
            <circle cx="10" cy="16" r="1.700" fill="#8c7a10" />
            <path d="M3 3q-2 2-1 5M17 3q2 2 1 5M5 3.500q-1 1-1 3M15 3.500q1 1 1 3" stroke="#8a9498" fill="none" />
        </>
    ),
    "Droite noire": <path d="M1 19L19 1" stroke="#333333" strokeWidth="1.300" />,
    "Droite verte": <path d="M1 19L19 1" stroke="#44aa44" strokeWidth="2" />,
    "Droite rouge": <path d="M1 19L19 1" stroke="#ff1010" strokeWidth="2" />,
    Horizontale: <path d="M1 10h18" stroke="#333333" strokeWidth="1.300" />,
    "Segment vert": (
        <>
            <path d="M10 10h9" stroke="#3cb03c" strokeWidth="2" />
            <circle cx="9" cy="10" r="1.500" fill="#c6dbe4" stroke="#3cb03c" />
        </>
    ),
    "Segment rouge": (
        <>
            <path d="M10 10h9" stroke="#ff1010" strokeWidth="2" />
            <circle cx="9" cy="10" r="1.500" fill="#c6dbe4" stroke="#ff1010" />
        </>
    ),
    Verticale: <path d="M10 1v18" stroke="#444444" strokeWidth="1.300" />,
    Canal: (
        <>
            <path d="M3 8l15-5M1 14l18-6" stroke="#e86060" strokeWidth="1.300" />
            <path d="M3 11l15-5" stroke="#e8b070" />
            <path d="M1 18l18-6" stroke="#3cb03c" strokeWidth="1.300" />
            <path d={plus(9, 9) + plus(17, 12) + plus(3, 16)} stroke="#2222ee" strokeWidth="1.500" />
        </>
    ),
    Fibonacci: (
        <>
            <path d="M4 4h12" stroke="#333333" strokeWidth="2" />
            <path d="M4 7h12M4 10h12" stroke="#f0c020" strokeWidth="1.500" strokeDasharray="2 1" />
            <path d="M4 14h8" stroke="#4466ee" strokeWidth="2" />
            <path d="M15 18v-6h4M15 15h3.500" stroke="#2222ee" strokeWidth="1.800" fill="none" />
        </>
    ),
    Texte: (
        <>
            <rect x="3" y="3" width="14" height="14" fill="#cfe2f2" stroke="#5b8ee6" />
            <path d="M6 8V6h8v2M10 6v8M8 14h4" stroke="#111111" strokeWidth="1.600" fill="none" />
        </>
    ),
    "Flèche haut": <path d="M10 4l5 5.500h-3V16H8V9.500H5z" fill="#2aa52a" stroke="#187018" />,
    "Flèche bas": <path d="M10 16l5-5.500h-3V4H8v6.500H5z" fill="#ff1010" stroke="#c01010" />,
    Valider: <path d="M3 11l3-2 3 3c2-5 5-8 8-9v4c-4 3-6 6-8 11z" fill="#44cc44" stroke="#228a22" />,
    Croix: <path d="M6 2l4 4 4-4 4 4-4 4 4 4-4 4-4-4-4 4-4-4 4-4-4-4z" fill="#ff1010" stroke="#c00808" />,
    Triangle: (
        <>
            <path d="M10 4l6 12H4z" fill="#b9dcc0" stroke="#3caa5c" />
            <path d={plus(10, 4) + plus(16, 16) + plus(4, 16)} stroke="#2222ee" strokeWidth="1.500" />
        </>
    ),
    Ellipse: (
        <>
            <ellipse cx="10" cy="10" rx="7" ry="5.500" fill="#ddd0c4" stroke="#f08850" />
            <path d={plus(17, 5) + plus(3, 15)} stroke="#2222ee" strokeWidth="1.500" />
        </>
    ),
    Parallèles: (
        <>
            <path d="M1 6h18M1 14h18" stroke="#e86060" />
            <path d={plus(15, 6) + plus(5, 14)} stroke="#2222ee" strokeWidth="1.500" />
        </>
    ),
    Rectangle: (
        <>
            <rect x="4" y="6" width="12" height="9" fill="#bcd4f5" stroke="#6a9cf0" />
            <path d={plus(16, 6) + plus(4, 15)} stroke="#2222ee" strokeWidth="1.500" />
        </>
    ),
    Vagues: (
        <>
            <path d="M1 17l3-9 3 7 3-10 3 10 3-7 3 9" fill="none" stroke="#7aa6f0" />
            <path d={plus(10, 4) + plus(4, 9) + plus(16, 9) + plus(7, 14) + plus(13, 14)} stroke="#2222ee" strokeWidth="1.500" />
        </>
    ),
    Annuler: (
        <>
            <path d="M2 5l6 8-2 .5 1 3-2 .5-1-3-2 1z" fill="#ffffff" stroke="#777777" />
            <path d="M10 6c6-3 9 2 7 6s-6 3-7 2" fill="none" stroke="#2a40f0" strokeWidth="2" />
            <path d="M8 7l5-4v6z" fill="#2a40f0" />
        </>
    ),
    Aimant: (
        <>
            <path d="M5 16V9c0-6 10-6 10 0v7" fill="none" stroke="#e04030" strokeWidth="3.500" />
            <path d="M3.500 15.500h3.500M13 15.500h3.500" stroke="#eeeeee" strokeWidth="3" />
        </>
    ),
    Verrouiller: (
        <>
            <path d="M8 9V6c0-4 7-4 7 0v3" fill="none" stroke="#999999" strokeWidth="2" />
            <rect x="6" y="9" width="11" height="8" fill="#f0b020" stroke="#a87808" />
            <path d="M11.500 11v4" stroke="#333333" strokeWidth="2" />
            <path d="M2 3l5 7-2 .5 1 3-2 .5-1-3z" fill="#ffffff" stroke="#777777" />
        </>
    ),
    Tendance: (
        <>
            <path d="M5 3h13" stroke="#ff1010" strokeWidth="2" />
            <path d="M2 8l2 3M5 14l4-7M12 12l5-9" fill="none" stroke="#3cb03c" strokeWidth="1.300" />
            <path d="M2 8l4 7M9 6l3 6" stroke="#e83030" strokeWidth="1.300" />
            <path d="M2 17h16" stroke="#18b018" strokeWidth="2" />
        </>
    ),
    Biseau: (
        <>
            <path d="M2 2l16 5" stroke="#ff1010" strokeWidth="2" />
            <path d="M3 4l3 12 3-11 4 9 2-8 3 6" fill="none" stroke="#e83030" strokeWidth="1.300" />
            <path d="M6 16l3-11M13 14l2-8" stroke="#3cb03c" strokeWidth="1.300" />
            <path d="M2 18l16-5" stroke="#18b018" strokeWidth="2" />
        </>
    ),
};

const baseTools = [
    "Dessiner", "Pointeur", "Loupe", "Copier", "Mesurer", "Déplacer", "Outils", "Supprimer", "Alerte objet", "Alerte",
    "Droite noire", "Droite verte", "Droite rouge", "Horizontale", "Segment vert", "Segment rouge",
];
const minuteTools = [...baseTools, "Verticale", "Canal"];
const allTools = [
    ...minuteTools, "Fibonacci", "Texte", "Flèche haut", "Flèche bas", "Valider", "Croix", "Triangle", "Ellipse", "Parallèles",
    "Rectangle", "Vagues", "Annuler", "Aimant", "Verrouiller", "Tendance", "Biseau", "Verticale", "Fibonacci",
];

function Toolbar({ tools, scroll }: { tools: string[]; scroll?: boolean }) {
    return (
        <div className="flex w-[27px] shrink-0 flex-col border-r border-[#a3b1b6] bg-[#c6dbe4]">
            {scroll && (
                <button type="button" aria-label="Défiler vers le haut" className="flex h-[12px] shrink-0 items-center justify-center border-b border-[#a3b8c0]">
                    <svg width="8" height="4" viewBox="0 0 8 4" aria-hidden="true"><path d="M4 0l4 4H0z" fill="#93a4ac" /></svg>
                </button>
            )}
            <div className={clsx("flex min-h-0 flex-1 flex-col overflow-hidden", scroll ? "pt-px" : "pb-11 pt-px")}>
                {tools.map((tool, i) => (
                    <button
                        key={i}
                        type="button"
                        aria-label={tool}
                        className={clsx(
                            "mx-px flex h-[23px] min-h-0 items-center justify-center",
                            scroll && "shrink-0",
                            tool === "Pointeur" && "rounded-sm border border-[#94a6ae] bg-[#b1c3cb]"
                        )}
                    >
                        <svg className="shrink-0" width="20" height="20" viewBox="0 0 20 20" aria-hidden="true">{icons[tool]}</svg>
                    </button>
                ))}
            </div>
            {scroll && (
                <button type="button" aria-label="Défiler vers le bas" className="flex h-[12px] shrink-0 items-center justify-center border-y border-[#a3b8c0] bg-[#dceaf0]">
                    <svg width="8" height="4" viewBox="0 0 8 4" aria-hidden="true"><path d="M4 4l4-4H0z" fill="#111111" /></svg>
                </button>
            )}
            <button type="button" aria-label="Plus d'outils" className="flex h-7 shrink-0 items-center justify-center border-t border-[#a3b8c0]">
                <svg width="18" height="14" viewBox="0 0 18 14" aria-hidden="true">
                    <circle cx="3" cy="4" r="1.700" fill="#333333" />
                    <circle cx="8.500" cy="4" r="1.700" fill="#333333" />
                    <circle cx="14" cy="4" r="1.700" fill="#333333" />
                    <path d="M12 9h6l-3 3z" fill="#111111" />
                </svg>
            </button>
        </div>
    );
}

/* ---------- window chrome ---------- */

function Picker({ label, value, bold }: { label: string; value: string; bold?: boolean }) {
    return (
        <label className="flex h-full items-center gap-1 border-r border-[#9db2bb] px-1">
            <select aria-label={label} defaultValue={value} className={clsx("appearance-none bg-transparent leading-3 text-[#16161a]", bold && "font-bold")}>
                <option>{value}</option>
            </select>
            <svg width="6" height="4" viewBox="0 0 6 4" aria-hidden="true"><path d="M0 0h6L3 4z" fill="#111111" /></svg>
        </label>
    );
}

interface TitleProps {
    period: string;
    units: string;
    active?: boolean;
    highlight?: boolean;
    linked?: boolean;
}

function TitleBar({ period, units, active, highlight, linked }: TitleProps) {
    return (
        <header
            className={clsx(
                "flex h-[22px] shrink-0 items-center border-b border-[#93a8b0] bg-gradient-to-b",
                active ? "from-[#bfe2f8] to-[#a4c9de]" : "from-[#e0f3f9] to-[#c4dae3]"
            )}
        >
            <div className="flex h-full w-[22px] items-center justify-center border-r border-[#9db2bb]">
                <svg width="16" height="16" viewBox="0 0 16 16" aria-hidden="true">
                    <path d="M4 3v12" stroke="#8c2f2f" />
                    <rect x="1.500" y="6.500" width="5" height="6" fill="#ee5a5a" stroke="#b03030" />
                    <path d="M12 0v14" stroke="#1c6e1c" />
                    <rect x="9.500" y="2.500" width="5" height="9" fill="#36cc4a" stroke="#1c8a2c" />
                </svg>
            </div>
            <button type="button" aria-label="Lier la fenêtre" className="flex h-full w-[15px] items-center justify-center border-r border-[#9db2bb]">
                <svg width="10" height="18" viewBox="0 0 10 18" fill="none" aria-hidden="true">
                    <rect x="2" y="1.500" width="6" height="6" rx="3" stroke="#6d767a" strokeWidth="1.500" />
                    <rect x="2" y="10.500" width="6" height="6" rx="3" stroke="#6d767a" strokeWidth="1.500" />
                    <path d="M5 5v8" stroke="#6d767a" strokeWidth="2" />
                    {linked && <path d="M2 13l3 3 4-6" stroke="#2a6ee0" strokeWidth="1.500" />}
                </svg>
            </button>
            <Picker label="Instrument" value="NASDAQ" bold />
            <Picker label="Unité de temps" value={period} bold />
            <Picker label="Nombre d'unités" value={units} />
            <button type="button" aria-label="Informations" className="ml-[6px] flex h-[11px] w-[11px] items-center justify-center border border-[#98a2a6] bg-white">
                <svg width="5" height="7" viewBox="0 0 5 7" aria-hidden="true"><path d="M2 0h2v1.500H2zM1 3h3v3h1v1H1V6h1V4H1z" fill="#777777" /></svg>
            </button>
            <div className="flex-1" />
            <button type="button" aria-label="Actualiser" className={clsx("flex h-[22px] w-[21px] items-center justify-center", highlight && "bg-white")}>
                <svg width="16" height="15" viewBox="0 0 16 15" aria-hidden="true">
                    <path d="M9 1.500C5 .5 3 3 3.500 7" fill="none" stroke="#e84444" strokeWidth="2.300" />
                    <path d="M0 6h7.500L4 11z" fill="#e84444" />
                    <path d="M7 13.500c4 1 6-1.500 5.500-5.500" fill="none" stroke="#22b422" strokeWidth="2.300" />
                    <path d="M8.500 9H16l-3.500-5z" fill="#22b422" />
                </svg>
            </button>
            <div className={clsx("flex items-center gap-[3px] pl-1 pr-1", active ? "text-[#5f8298]" : "text-[#98a8b0]")}>
                <button type="button" aria-label="Réduire" className="h-3 w-3">
                    <svg width="12" height="12" viewBox="0 0 12 12" aria-hidden="true"><path d="M1 10h8" stroke="currentColor" strokeWidth="2" /></svg>
                </button>
                <button type="button" aria-label="Agrandir" className="h-3 w-3">
                    <svg width="12" height="12" viewBox="0 0 12 12" aria-hidden="true"><path d="M1.500 2.500h8v8h-8z" fill="none" stroke="currentColor" /><path d="M1 2h9" stroke="currentColor" strokeWidth="2" /></svg>
                </button>
                <button type="button" aria-label="Fermer" className="h-3 w-3">
                    <svg width="12" height="12" viewBox="0 0 12 12" aria-hidden="true"><path d="M1.500 2l8 8M9.500 2l-8 8" stroke="currentColor" strokeWidth="1.800" /></svg>
                </button>
            </div>
        </header>
    );
}

function Gears() {
    return (
        <svg width="13" height="13" viewBox="0 0 13 13" fill="none" aria-hidden="true">
            <circle cx="5" cy="5" r="2.800" stroke="#2468c8" strokeWidth="1.600" />
            <circle cx="5" cy="5" r="4.200" stroke="#2468c8" strokeWidth="1.300" strokeDasharray="1.700 1.600" />
            <circle cx="10" cy="9.500" r="1.700" stroke="#2468c8" strokeWidth="1.200" />
            <circle cx="10" cy="9.500" r="2.600" stroke="#2468c8" strokeDasharray="1 1" />
        </svg>
    );
}

function Counter({ label, pink, positive }: { label: string; pink?: boolean; positive?: boolean }) {
    return (
        <div className="flex items-center">
            <span className="mr-[6px]">{label}</span>
            <b className={positive ? "text-[#158015]" : ""}>0</b>
            <button type="button" aria-label={`Annuler ${label}`} className={clsx("ml-[3px] mr-2 flex h-[11px] w-3 items-center justify-center border", pink ? "border-[#e6dcdc] bg-[#fbf0f0]" : "border-[#b4b4ac] bg-[#d2d2c8]")}>
                <svg width="8" height="8" viewBox="0 0 8 8" aria-hidden="true"><path d="M1 1l6 6M7 1L1 7" stroke={pink ? "#f5a0a0" : "#85857c"} strokeWidth="2.200" /></svg>
            </button>
            <span className="mr-[5px]">/</span>
            <b className="mr-[2px]">0</b>
            <Gears />
        </div>
    );
}

function InfoBar({ positive }: { positive?: boolean }) {
    return (
        <div className="flex h-[18px] shrink-0 items-center justify-evenly whitespace-nowrap border-b border-[#c8d6dc] bg-white text-[#26262c]">
            <span>Gain latent : <b className="text-[#0e0e12]">0,00 pts</b></span>
            <span>Gain Jour : <b className="text-[#b01010]">-24,90 pts</b></span>
            <Counter label="Ordres :" />
            <Counter label="Position :" pink positive={positive} />
        </div>
    );
}

function OrderTypeButton({ label, flip }: { label: string; flip?: boolean }) {
    const first = flip ? "#22a822" : "#e03030";
    const second = flip ? "#e03030" : "#22a822";
    return (
        <label className="flex w-8 flex-col items-center">
            <span className="leading-[13px]">{label}</span>
            <button type="button" aria-label={`Ordre ${label}`} className="flex h-[25px] w-[25px] items-center justify-center rounded-[2px] border border-[#aab2b5] bg-gradient-to-b from-white to-[#e4e6e7]">
                <svg width="21" height="21" viewBox="0 0 21 21" aria-hidden="true">
                    <path d="M8.500 1.500h5l3 3v15h-8z" fill="#f4f4f4" stroke="#888888" />
                    <path d="M9 10.500h10v9H9z" fill="#f4f4f4" stroke="#888888" />
                    <path d="M9 13.500h10M9 16.500h10" stroke="#888888" />
                    <path d={flip ? "M4.500 1L8 5H6v4H3V5H1z" : "M4.500 9L8 5H6V1H3v4H1z"} fill={first} />
                    <path d={flip ? "M4.500 20L8 16H6v-4H3v4H1z" : "M4.500 12L8 16H6v4H3v-4H1z"} fill={second} />
                </svg>
            </button>
        </label>
    );
}

function PriceButton({ label, price, sell }: { label: string; price: string; sell?: boolean }) {
    return (
        <div className="flex flex-col items-center">
            <span className="leading-[13px]">{label}</span>
            <button
                type="button"
                aria-label={label}
                className={clsx(
                    "flex h-[26px] w-[74px] items-baseline justify-center whitespace-pre rounded-[3px] bg-gradient-to-b text-white",
                    sell ? "from-[#ec5a5a] to-[#dc4444]" : "from-[#3cc83c] to-[#22b022]"
                )}
            >
                <span className="opacity-80">11  8</span>
                <span className="text-xl leading-6">{price}</span>
            </button>
        </div>
    );
}

function DistanceRow({ id, name, value, checked }: { id: string; name: string; value: string; checked?: boolean }) {
    return (
        <div className="flex h-5 items-center">
            <span className="relative flex h-[11px] w-[11px]">
                <input id={id} type="checkbox" defaultChecked={checked} className="peer h-[11px] w-[11px] appearance-none rounded-[2px] border border-[#9aa5a9] bg-white" />
                <svg className="pointer-events-none absolute inset-0 hidden peer-checked:block" width="11" height="11" viewBox="0 0 11 11" aria-hidden="true">
                    <path d="M2.500 5.500L5 8l4-6" fill="none" stroke="#111111" strokeWidth="1.800" />
                </svg>
            </span>
            <label htmlFor={id} className="ml-[3px] w-[10px]">{name}</label>
            <input aria-label={`Distance ${name}`} defaultValue={value} className={clsx("h-[18px] rounded-[2px] border border-[#aab2b5] px-px", checked ? "w-[17px]" : "w-[11px] text-[#a0a4a8]")} />
            <span className="ml-[3px]">pts</span>
        </div>
    );
}

function TradeBar({ id }: { id: string }) {
    return (
        <div className="flex h-[42px] shrink-0 items-center justify-center gap-[3px] border-b border-[#c8d6dc] bg-white text-[#26262c]">
            <div className="flex flex-col gap-px pt-px">
                <button type="button" aria-label="Réglages" className="flex h-4 w-4 items-center justify-center rounded-[2px] border border-[#b8bfc2] bg-[#f4f5f5]">
                    <svg width="12" height="12" viewBox="0 0 12 12" aria-hidden="true">
                        <path d="M1 11c-1-1 0-2 1-3l3-3C4 2 6 0 9 .8L7.500 2.500l2 2L11 3c1 3-1 5-4 4l-3 3c-1 1-2 2-3 1z" fill="#ffffff" stroke="#333333" />
                    </svg>
                </button>
                <button type="button" aria-label="Clavier" className="flex h-[13px] w-4 items-center justify-center rounded-[2px] bg-[#b8c3c8]">
                    <svg width="14" height="9" viewBox="0 0 14 9" aria-hidden="true">
                        <rect x=".5" y=".5" width="13" height="8" fill="none" stroke="#ffffff" />
                        <path d="M2 3h10M2 5h10" stroke="#ffffff" strokeDasharray="1 1" />
                        <path d="M4 7h6" stroke="#ffffff" />
                    </svg>
                </button>
            </div>
            <div className="flex flex-col items-center pb-[7px]">
                <label htmlFor={`${id}-qty`} className="leading-[13px]">Qté</label>
                <input id={`${id}-qty`} defaultValue="0.5" className="h-[19px] w-[54px] rounded-[2px] border border-[#9aa5a9] px-px text-right" />
            </div>
            <span className="h-7 w-px bg-[#b0bbbf]" />
            <OrderTypeButton label="Limite" />
            <OrderTypeButton label="Stop" flip />
            <PriceButton label="Vendre" price="12,0" sell />
            <PriceButton label="Acheter" price="13,0" />
            <span className="mr-1 h-7 w-px bg-[#b0bbbf]" />
            <div>
                <DistanceRow id={`${id}-limit`} name="L" value="5" />
                <DistanceRow id={`${id}-stop`} name="S" value="12" checked />
            </div>
        </div>
    );
}

interface WindowProps extends TitleProps {
    data: ChartData;
    tools?: string[];
    scroll?: boolean;
    trade?: boolean;
    positive?: boolean;
    className?: string;
}

function ChartWindow({ data, tools, scroll, trade, positive, className, ...title }: WindowProps) {
    return (
        <section className={clsx("flex min-h-0 min-w-0 flex-col border-y border-[#55666c] bg-white", className)}>
            <TitleBar {...title} />
            <div className="flex min-h-0 flex-1">
                {tools && <Toolbar tools={tools} scroll={scroll} />}
                <div className="flex min-w-0 flex-1 flex-col">
                    <InfoBar positive={positive} />
                    {trade && <TradeBar id={title.period.replace(" ", "-")} />}
                    <div className="flex min-h-0 flex-1">
                        <Plot data={data} />
                        <PriceAxis data={data} />
                    </div>
                    <TimeAxis data={data} />
                </div>
            </div>
        </section>
    );
}

export default function App() {
    return (
        <main className="grid h-screen min-h-[720px] grid-cols-[627fr_601fr_572fr] grid-rows-[436fr_480fr] bg-[#a9b9be] pt-[2px] font-['DejaVu_Sans_Condensed','DejaVu_Sans',sans-serif] text-[11px]">
            <ChartWindow data={twoMinutes} period="2 minutes" units="100 unités" tools={baseTools} scroll className="border-x" />
            <ChartWindow data={fiveMinutes} period="5 minutes" units="100 unités" active className="border-r" />
            <ChartWindow data={ticks} period="100 ticks" units="1 k unités" tools={allTools} trade highlight positive className="row-span-2 border-l" />
            <ChartWindow data={oneMinute} period="1 minute" units="100 unités" tools={minuteTools} scroll trade highlight linked className="border-x" />
            <ChartWindow data={fifteenMinutes} period="15 minutes" units="100 unités" className="border-r" />
        </main>
    );
}
